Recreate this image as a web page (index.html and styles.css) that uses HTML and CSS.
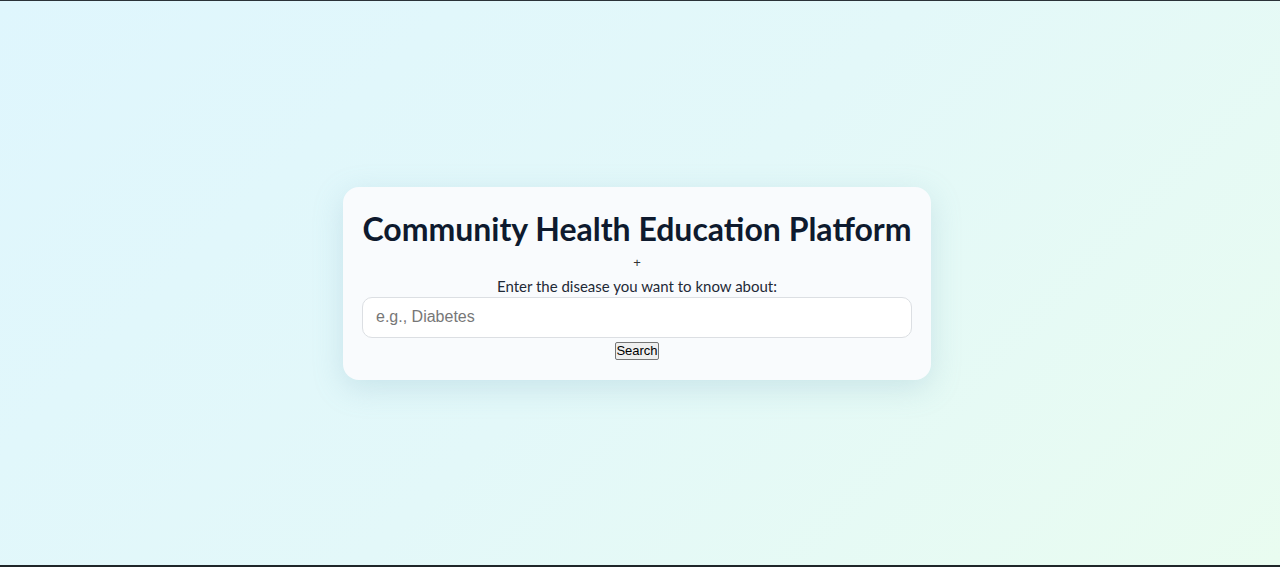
FILE: index.html
```html
<!DOCTYPE html>
<html lang="en">
<head>
<meta charset="utf-8">
<title>Community Health Education Platform</title>
<link rel="stylesheet" href="styles.css">
</head>
<body>
<div class="page">
  <div class="card">
    <h1 class="title">Community Health Education Platform</h1>
    <div class="plus">+</div>
    <label class="label" for="disease">Enter the disease you want to know about:</label>
    <input class="field" id="disease" type="text" placeholder="e.g., Diabetes">
    <div class="actions"><button class="btn" type="button">Search</button></div>
  </div>
</div>
</body>
</html>
```
FILE: styles.css
```css
html, body {
  margin: 0;
  padding: 0;
}
body {
  font-family: Lato, "Noto Sans", sans-serif;
  background: linear-gradient(135deg, #dff6fd 0%, #e3f8f9 50%, #e9fcf0 100%);
}
.page {
  box-sizing: border-box;
  min-height: 100vh;
  height: 567px;
  padding-right: 6px;
  border-top: 1px solid #2a3238;
  border-bottom: 2px solid #1f2629;
  display: flex;
  align-items: center;
  justify-content: center;
}
.card {
  box-sizing: border-box;
  width: 588px;
  padding: 22px 19px 20px;
  background: #f9fbfd;
  border-radius: 16px;
  box-shadow: 0 8px 30px rgba(120, 170, 190, 0.25);
  display: flex;
  flex-direction: column;
  align-items: center;
  text-align: center;
}
.title {
  margin: 0;
  font-size: 32px;
  line-height: 40px;
  font-weight: 700;
  color: #0e1a2e;
  white-space: nowrap;
}
.plus {
  margin-top: 6px;
  font-family: "Liberation Sans", Arial, sans-serif;
  font-size: 13px;
  line-height: 16px;
  color: #333;
}
.label {
  margin-top: 6px;
  font-size: 15px;
  line-height: 18px;
  color: #1f2a37;
}
.field {
  box-sizing: border-box;
  margin-top: 2px;
  width: 100%;
  height: 41px;
  padding: 0 13px;
  border: 1px solid #dcdfe3;
  border-radius: 10px;
  background: #fff;
  font-family: "Liberation Sans", Arial, sans-serif;
  font-size: 16px;
  color: #222;
  outline: none;
}
.field::placeholder {
  color: #777;
}
.actions {
  margin-top: 4px;
  line-height: 0;
}
.btn {
  font-family: "Liberation Sans", Arial, sans-serif;
  font-size: 13px;
  line-height: 14px;
  padding: 1px 0;
  border: 1px solid #767676;
  border-radius: 2px;
  background: #efefef;
  color: #000;
}
```
